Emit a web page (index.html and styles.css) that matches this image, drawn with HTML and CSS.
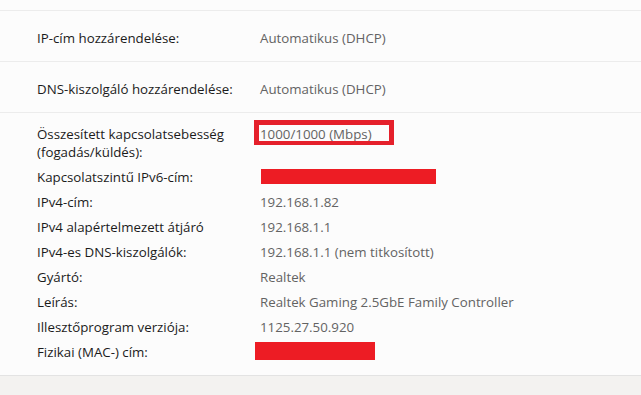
FILE: index.html
```html
<!DOCTYPE html>
<html lang="hu">
<head>
<meta charset="utf-8">
<title>Hálózati tulajdonságok</title>
<link rel="stylesheet" href="styles.css">
</head>
<body>
<div class="card">
  <div class="top"></div>
  <div class="row setting">
    <div class="label">IP-cím hozzárendelése:</div>
    <div class="value">Automatikus (DHCP)</div>
  </div>
  <div class="row setting">
    <div class="label">DNS-kiszolgáló hozzárendelése:</div>
    <div class="value">Automatikus (DHCP)</div>
  </div>
  <div class="details">
    <div class="label">Összesített kapcsolatsebesség<br>(fogadás/küldés):</div>
    <div class="value"><span class="marked">1000/1000 (Mbps)</span></div>
    <div class="label">Kapcsolatszintű IPv6-cím:</div>
    <div class="value"><span class="redact ipv6"></span></div>
    <div class="label">IPv4-cím:</div>
    <div class="value">192.168.1.82</div>
    <div class="label">IPv4 alapértelmezett átjáró</div>
    <div class="value">192.168.1.1</div>
    <div class="label">IPv4-es DNS-kiszolgálók:</div>
    <div class="value">192.168.1.1 (nem titkosított)</div>
    <div class="label">Gyártó:</div>
    <div class="value">Realtek</div>
    <div class="label">Leírás:</div>
    <div class="value">Realtek Gaming 2.5GbE Family Controller</div>
    <div class="label">Illesztőprogram verziója:</div>
    <div class="value">1125.27.50.920</div>
    <div class="label">Fizikai (MAC-) cím:</div>
    <div class="value"><span class="redact mac"></span></div>
  </div>
</div>
</body>
</html>
```
FILE: styles.css
```css
html, body {
  margin: 0;
  padding: 0;
}
body {
  background: #f3f2f0;
  font-family: "Open Sans", "Noto Sans", sans-serif;
  font-size: 13.3px;
  color: #1b1b1b;
  width: 641px;
  height: 395px;
  overflow: hidden;
}
.card {
  background: #fcfcfc;
  border-bottom: 1px solid #e3e3e3;
}
.top {
  height: 10px;
  border-bottom: 1px solid #ececec;
}
.row {
  display: grid;
  grid-template-columns: 223px 1fr;
  align-items: center;
  height: 47px;
  padding: 3px 0 0 37px;
  border-bottom: 1px solid #ececec;
}
.label {
  line-height: 18px;
}
.value {
  color: #636363;
  line-height: 18px;
}
.details {
  display: grid;
  grid-template-columns: 223px 1fr;
  row-gap: 7px;
  padding: 12px 0 14px 37px;
}
.marked {
  position: relative;
  display: inline-block;
}
.marked::after {
  content: "";
  position: absolute;
  left: -6px;
  top: -5px;
  width: 130px;
  height: 16px;
  border: 5px solid #e5202b;
  border-bottom-width: 4px;
}
.redact {
  display: inline-block;
  background: #ed1c24;
  vertical-align: top;
}
.ipv6 {
  width: 175px;
  height: 15px;
  margin-left: 1px;
  margin-top: 1px;
}
.mac {
  width: 120px;
  height: 18px;
  margin-left: -5px;
  margin-top: -1px;
}
```
